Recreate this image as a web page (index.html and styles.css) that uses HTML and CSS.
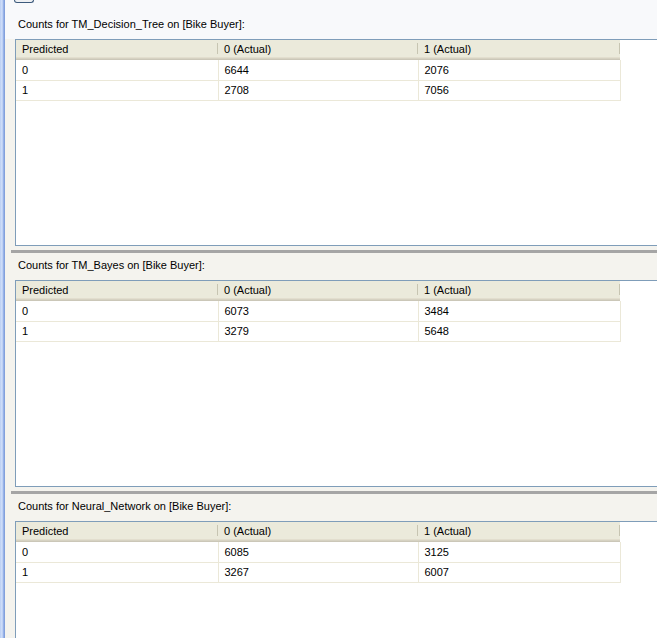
FILE: index.html
```html
<!DOCTYPE html>
<html>
<head>
<meta charset="utf-8">
<link rel="stylesheet" href="styles.css">
</head>
<body>
<div class="window">
  <div class="edge"></div>
  <div class="content">
    <div class="topbar"><div class="btn-stub"></div></div>

    <section class="pane first">
      <div class="label">Counts for TM_Decision_Tree on [Bike Buyer]:</div>
      <div class="grid">
        <table class="matrix">
          <thead><tr><th>Predicted</th><th>0 (Actual)</th><th>1 (Actual)</th></tr></thead>
          <tbody>
            <tr><td>0</td><td>6644</td><td>2076</td></tr>
            <tr><td>1</td><td>2708</td><td>7056</td></tr>
          </tbody>
        </table>
      </div>
    </section>

    <section class="pane">
      <div class="splitter"></div>
      <div class="label">Counts for TM_Bayes on [Bike Buyer]:</div>
      <div class="grid">
        <table class="matrix">
          <thead><tr><th>Predicted</th><th>0 (Actual)</th><th>1 (Actual)</th></tr></thead>
          <tbody>
            <tr><td>0</td><td>6073</td><td>3484</td></tr>
            <tr><td>1</td><td>3279</td><td>5648</td></tr>
          </tbody>
        </table>
      </div>
    </section>

    <section class="pane">
      <div class="splitter"></div>
      <div class="label">Counts for Neural_Network on [Bike Buyer]:</div>
      <div class="grid">
        <table class="matrix">
          <thead><tr><th>Predicted</th><th>0 (Actual)</th><th>1 (Actual)</th></tr></thead>
          <tbody>
            <tr><td>0</td><td>6085</td><td>3125</td></tr>
            <tr><td>1</td><td>3267</td><td>6007</td></tr>
          </tbody>
        </table>
      </div>
    </section>
  </div>
</div>
</body>
</html>
```

FILE: styles.css
```css
html, body {
  margin: 0;
  padding: 0;
  height: 100%;
  overflow: hidden;
  background: #ffffff;
}

body {
  font-family: "Liberation Sans", Arial, sans-serif;
  font-size: 11px;
  color: #000;
}

.window {
  display: flex;
  height: 638px;
  overflow: hidden;
}

.edge {
  width: 5px;
  flex: none;
  background: linear-gradient(to right, #b9cdf3 0, #d3e1fa 2px, #a9c0ee 3px, #86a5e2 4px, #7f9bd6 5px);
}

.content {
  flex: 1;
  min-width: 0;
  background: #f4f3ee;
  overflow: hidden;
}

.topbar {
  height: 12px;
  background: #f8f9fb;
}

.btn-stub {
  margin-left: 9px;
  width: 18px;
  height: 2px;
  border: 1px solid #3d5a7c;
  border-top: none;
  border-radius: 0 0 3px 3px;
  background: #eef0f3;
}

.pane {
  display: flex;
  flex-direction: column;
}

.pane.first .label {
  background: #f8f9fb;
}

.splitter {
  height: 3px;
  margin: 4px 0 0 6px;
  background: #a5a5a5;
}

.label {
  height: 27px;
  box-sizing: border-box;
  padding: 6px 0 0 13px;
  line-height: 13px;
  white-space: nowrap;
}

.grid {
  margin-left: 10px;
  height: 205px;
  border-top: 1px solid #7f9db9;
  border-bottom: 1px solid #7f9db9;
  border-left: 1px solid #7f9db9;
  background: #ffffff;
}

.matrix {
  border-collapse: collapse;
  table-layout: fixed;
  width: 604px;
}

.matrix th:nth-child(1), .matrix td:nth-child(1) { width: 202px; }
.matrix th:nth-child(2), .matrix td:nth-child(2) { width: 200px; }
.matrix th:nth-child(3), .matrix td:nth-child(3) { width: 202px; }

.matrix th {
  position: relative;
  height: 20px;
  padding: 0 0 3px 6px;
  box-sizing: border-box;
  text-align: left;
  font-weight: normal;
  white-space: nowrap;
  background: linear-gradient(to bottom, #ebeadb 0, #ebeadb 17px, #e2dece 17px, #e2dece 18px, #d6d2c2 18px, #d6d2c2 19px, #cbc7b8 19px);
}

.matrix th::after {
  content: "";
  position: absolute;
  right: 0;
  top: 3px;
  bottom: 6px;
  width: 1px;
  background: #c7c5b2;
  box-shadow: 1px 0 0 #ffffff;
}

.matrix th:last-child::after {
  right: 0;
  box-shadow: none;
}

.matrix td {
  height: 20px;
  box-sizing: border-box;
  padding: 0 0 0 6px;
  border-right: 1px solid #ebe8d8;
  border-bottom: 1px solid #ebe8d8;
  white-space: nowrap;
}
```
